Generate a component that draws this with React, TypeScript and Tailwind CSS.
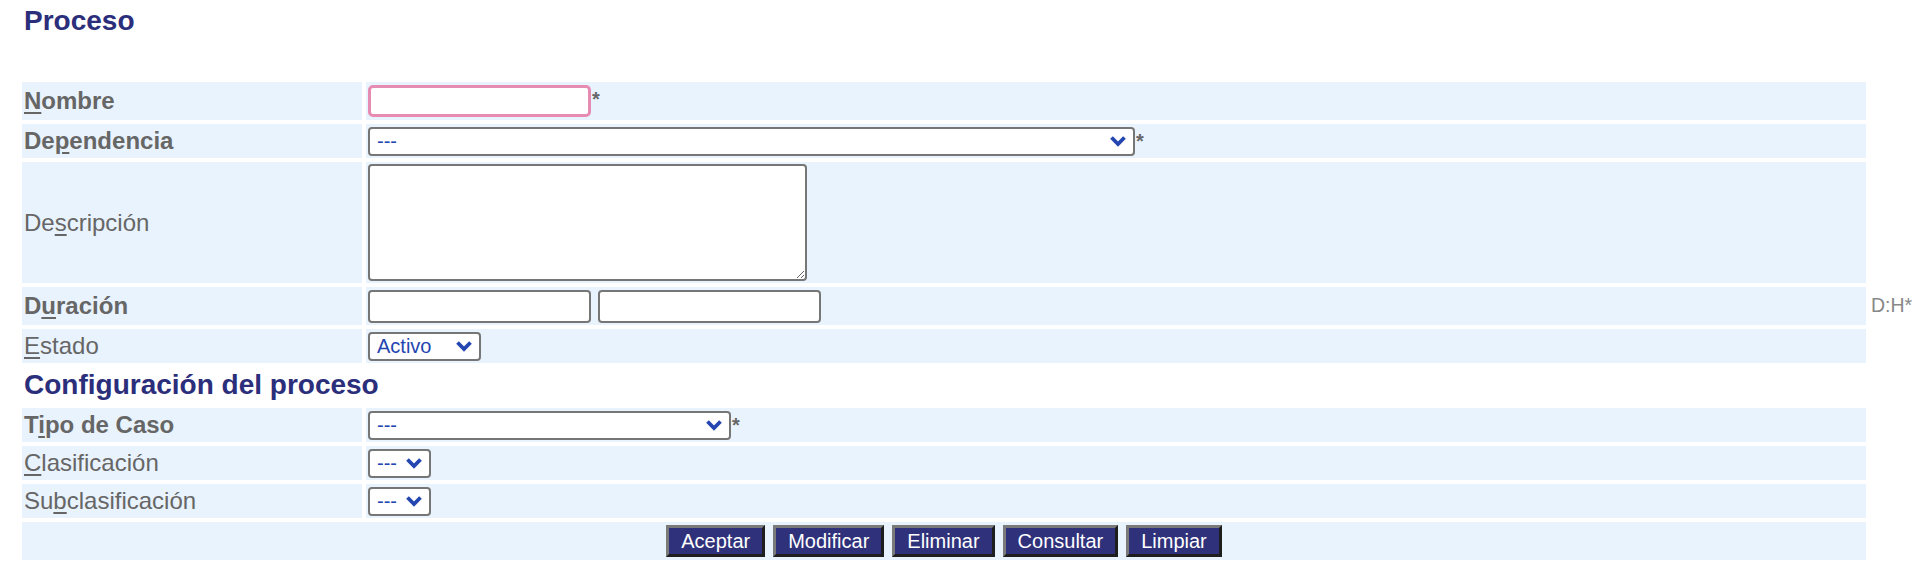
import React from 'react';

const font = { fontFamily: '"Liberation Sans", Arial, sans-serif' };

function Chevron() {
  return (
    <svg
      width="18"
      height="12"
      viewBox="0 0 18 12"
      className="pointer-events-none absolute right-[8px] top-1/2 -translate-y-1/2"
    >
      <path d="M2.5 2.5 L9 9 L15.5 2.5" fill="none" stroke="#2446b0" strokeWidth="3.8" />
    </svg>
  );
}

function Select({ value, w }: { value: string; w: string }) {
  return (
    <div className={`relative ${w}`}>
      <select className="h-[29px] w-full appearance-none rounded-[4px] border-2 border-[#767676] bg-white pl-[7px] text-[20px] leading-none text-[#2446b0] outline-none">
        <option>{value}</option>
      </select>
      <Chevron />
    </div>
  );
}

function Label({ pre, u, post, bold }: { pre: string; u: string; post: string; bold?: boolean }) {
  return (
    <span className={`text-[24px] text-[#666] ${bold ? 'font-bold' : ''}`}>
      {pre}
      <span className="underline decoration-[2px] underline-offset-[3px]">{u}</span>
      {post}
    </span>
  );
}

function Row({
  label,
  h,
  children,
  extra,
}: {
  label: React.ReactNode;
  h: string;
  children?: React.ReactNode;
  extra?: React.ReactNode;
}) {
  return (
    <div className={`flex gap-[4px] ${h}`}>
      <div className="flex w-[340px] shrink-0 items-center bg-[#e9f3fd] pl-[2px]">{label}</div>
      <div className="flex w-[1500px] shrink-0 items-center bg-[#e9f3fd] pl-[2px]">{children}</div>
      <div className="flex w-[60px] shrink-0 items-center pl-[1px] text-[19.5px] text-[#888]">{extra}</div>
    </div>
  );
}

function Asterisk() {
  return <span className="ml-[1px] text-[20px] font-bold leading-none text-[#666]">*</span>;
}

export default function App() {
  const buttons = ['Aceptar', 'Modificar', 'Eliminar', 'Consultar', 'Limpiar'];
  return (
    <div className="min-h-screen w-[1914px] overflow-hidden bg-white pl-[22px]" style={font}>
      <h1 className="mt-[5px] mb-[45px] pl-[2px] text-[28px] font-bold leading-[32px] text-[#2b2e7a]">Proceso</h1>

      <div className="flex flex-col gap-[4px]">
        <Row h="h-[38px]" label={<Label bold pre="" u="N" post="ombre" />}>
          <div className="flex items-baseline">
            <input className="h-[32px] w-[223px] rounded-[5px] border-[3px] border-[#e68cb3] bg-white outline-none" />
            <Asterisk />
          </div>
        </Row>

        <Row h="h-[34px]" label={<Label bold pre="De" u="p" post="endencia" />}>
          <div className="flex items-baseline">
            <Select value="---" w="w-[767px]" />
            <Asterisk />
          </div>
        </Row>

        <Row h="h-[121px]" label={<Label pre="De" u="s" post="cripción" />}>
          <textarea className="h-[117px] w-[439px] resize rounded-[4px] border-2 border-[#767676] bg-white outline-none" />
        </Row>

        <Row
          h="h-[38px]"
          label={<Label bold pre="D" u="u" post="ración" />}
          extra={<span>D:H*</span>}
        >
          <div className="flex gap-[7px]">
            <input className="h-[33px] w-[223px] rounded-[4px] border-2 border-[#767676] bg-white outline-none" />
            <input className="h-[33px] w-[223px] rounded-[4px] border-2 border-[#767676] bg-white outline-none" />
          </div>
        </Row>

        <Row h="h-[34px]" label={<Label pre="" u="E" post="stado" />}>
          <Select value="Activo" w="w-[113px]" />
        </Row>

        <div className="h-[37px] pt-[2px] pl-[2px]">
          <h2 className="text-[28px] font-bold leading-[32px] text-[#2b2e7a]">Configuración del proceso</h2>
        </div>

        <Row h="h-[34px]" label={<Label bold pre="T" u="i" post="po de Caso" />}>
          <div className="flex items-baseline">
            <Select value="---" w="w-[363px]" />
            <Asterisk />
          </div>
        </Row>

        <Row h="h-[34px]" label={<Label pre="" u="C" post="lasificación" />}>
          <Select value="---" w="w-[63px]" />
        </Row>

        <Row h="h-[34px]" label={<Label pre="Su" u="b" post="clasificación" />}>
          <Select value="---" w="w-[63px]" />
        </Row>

        <div className="flex h-[38px] w-[1844px] items-center justify-center gap-[8px] bg-[#e9f3fd]">
          {buttons.map((b) => (
            <button
              key={b}
              className="h-[32px] border-[3px] border-t-[#7a7a7a] border-l-[#7a7a7a] border-r-[#1e1e1e] border-b-[#1e1e1e] bg-[#2f317a] px-[12px] text-[20px] leading-none text-white"
            >
              {b}
            </button>
          ))}
        </div>
      </div>
    </div>
  );
}
